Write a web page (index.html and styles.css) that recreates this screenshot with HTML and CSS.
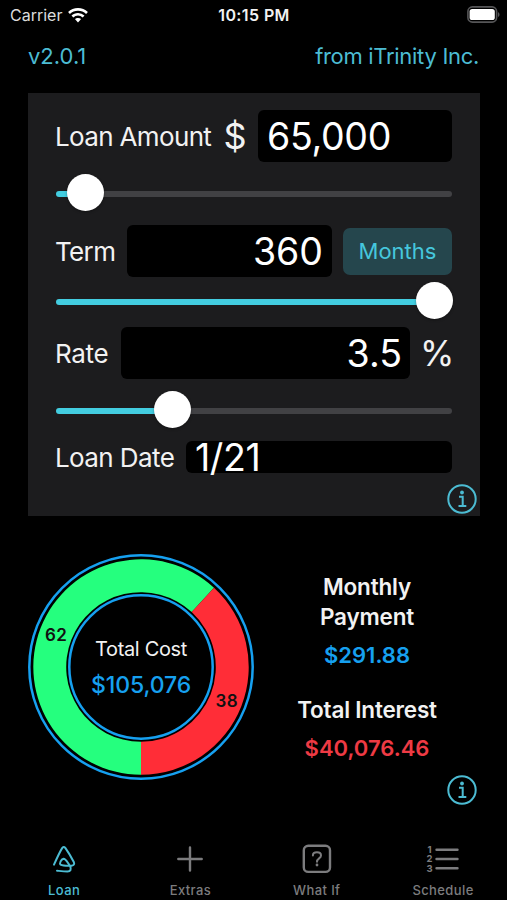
FILE: index.html
```html
<!DOCTYPE html>
<html lang="en">
<head>
<meta charset="utf-8">
<title>Loan</title>
<link rel="stylesheet" href="styles.css">
</head>
<body>
<div class="app">
  <header class="status">
    <div class="carrier"><span>Carrier</span>
      <svg width="20" height="15" viewBox="0 0 20 15" fill="#fff"><path d="M10 0C6.200 0 2.700 1.500.1 4L1.900 5.900A11.700 11.700 0 0 1 18.100 5.900L19.900 4A14.300 14.300 0 0 0 10 0Z"/><path d="M10 5C7.500 5 5.200 6 3.500 7.600L5.300 9.400A6.900 6.900 0 0 1 14.700 9.400L16.500 7.600A9.400 9.400 0 0 0 10 5Z"/><path d="M10 9.900C8.800 9.900 7.700 10.400 6.900 11.100L10 14.400 13.100 11.100A4.500 4.500 0 0 0 10 9.900Z"/></svg>
    </div>
    <div class="clock">10:15 PM</div>
    <svg class="battery" width="33" height="17" viewBox="0 0 33 17"><rect x=".9" y=".9" width="28.700" height="15.200" rx="4.500" fill="none" stroke="#555557" stroke-width="1.600"/><rect x="2.600" y="2.900" width="25.200" height="11.200" rx="2.600" fill="#fff"/><path d="M31 6.200c2 .7 2 4 0 4.700z" fill="#555557"/></svg>
  </header>

  <div class="topline"><span class="version">v2.0.1</span><span class="maker">from iTrinity Inc.</span></div>

  <main class="panel">
    <div class="row">
      <span class="label amount-label">Loan Amount</span><span class="dollar">$</span>
      <div class="field amount">65,000</div>
    </div>
    <div class="slider s1"><div class="fill"></div><div class="knob"></div><div class="rest"></div></div>
    <div class="row">
      <span class="label term-label">Term</span>
      <div class="field term">360</div>
      <button class="unit">Months</button>
    </div>
    <div class="slider s2"><div class="fill"></div><div class="knob"></div></div>
    <div class="row">
      <span class="label rate-label">Rate</span>
      <div class="field rate">3.5</div>
      <span class="percent">%</span>
    </div>
    <div class="slider s3"><div class="fill"></div><div class="knob"></div><div class="rest"></div></div>
    <div class="row date-row">
      <span class="label date-label">Loan Date</span>
      <div class="field date">1/21</div>
    </div>
    <svg class="info" width="30" height="30" viewBox="0 0 30 30"><circle cx="15" cy="15" r="13.700"/><path d="M12 12.800h3.700v9.100M11.500 22.100h7.800"/><circle class="dot" cx="15" cy="8.500" r="1.900"/></svg>
  </main>

  <section class="summary">
    <svg class="donut" width="228" height="228" viewBox="-114 -114 228 228">
      <path fill="#25ff7e" d="M0 107.700A107.700 107.700 0 1 1 73-79.200L50.700-55A74.800 74.800 0 1 0 0 74.800Z"/>
      <path fill="#ff2d37" d="M0 107.700A107.700 107.700 0 0 0 73-79.200L50.700-55A74.800 74.800 0 0 1 0 74.800Z"/>
      <circle r="111.700"/><circle r="71.700"/>
      <text class="share" x="-85" y="-26.400">62</text>
      <text class="share" x="85.700" y="40.300">38</text>
      <text class="cost-name" x="0" y="-11.200">Total Cost</text>
      <text class="cost" x="0" y="25.600">$105,076</text>
    </svg>
    <div class="totals">
      <div class="title monthly">Monthly<br>Payment</div>
      <div class="value blue">$291.88</div>
      <div class="title interest">Total Interest</div>
      <div class="value red">$40,076.46</div>
      <svg class="info" width="30" height="30" viewBox="0 0 30 30"><circle cx="15" cy="15" r="13.700"/><path d="M12 12.800h3.700v9.100M11.500 22.100h7.800"/><circle class="dot" cx="15" cy="8.500" r="1.900"/></svg>
    </div>
  </section>

  <nav class="tabs">
    <div class="tab active"><svg width="30" height="32" viewBox="0 0 30 32"><path d="M5 21.700C8 15 11 8.500 13.300 4.900Q14.800 3.200 16.300 4.900C19.500 9.500 22.500 14.500 24.800 19Q26.200 22.300 22.500 22.800C18 23 13.500 22.700 11.500 21.600C10.300 20.500 12 16.200 14.500 15.700C17 15.700 18.800 20 21 22.800C22.700 26.500 21.500 28.500 18.500 28.500C15 28.500 11 28 8 27.700"/></svg><span>Loan</span></div>
    <div class="tab extras"><svg width="30" height="32" viewBox="0 0 30 32"><path d="M15 4.400v23.200M3.300 16h23.400"/></svg><span>Extras</span></div>
    <div class="tab whatif"><svg width="30" height="32" viewBox="0 0 30 32"><rect x="1.800" y="2.700" width="26.200" height="26.200" rx="4.500"/><path class="thin" d="M10.900 12.500C10.900 8.300 19 8.300 19 12.500C19 15.500 15 15.300 15 18.800"/><circle class="dot" cx="15" cy="22" r="1.400"/></svg><span>What If</span></div>
    <div class="tab schedule"><svg width="34" height="32" viewBox="0 0 34 32"><path d="M10.500 6.800h21M10.500 16h21M10.500 25.200h21"/><g class="nums"><text x="3.700" y="10">1</text><text x="3.700" y="19.300">2</text><text x="3.700" y="28.500">3</text></g></svg><span>Schedule</span></div>
  </nav>
</div>
</body>
</html>
```
FILE: styles.css
```css
* { box-sizing: border-box; }
body { margin: 0; background: #000; color: #f2f2f2; font-family: Inter, "Liberation Sans", sans-serif; }
.app { width: 507px; height: 900px; overflow: hidden; display: flex; flex-direction: column; background: #000; }
svg { display: block; flex: none; }
span, .field, .unit, .clock, .title, .value { white-space: nowrap; }

.status { height: 30px; flex: none; display: grid; grid-template-columns: 1fr auto 1fr; align-items: center; padding: 0 7px 0 10px; }
.carrier { display: flex; align-items: center; gap: 6px; font-size: 16px; line-height: 20px; color: #dcdcdc; }
.clock { font-size: 16px; font-weight: 600; line-height: 20px; letter-spacing: .4px; margin-right: 2px; }
.battery { justify-self: end; margin-top: -2px; }

.topline { height: 63px; flex: none; display: flex; justify-content: space-between; padding: 12px 28px 0; font-size: 22px; line-height: 29px; color: #4cbcd3; }
.maker { letter-spacing: -.3px; }

.panel { margin: 0 27px 0 28px; height: 423px; flex: none; background: #1c1c1e; padding: 17px 28px 0 27px; display: flex; flex-direction: column; }
.row { display: flex; align-items: center; height: 52px; flex: none; }
.label { font-size: 26px; line-height: 53px; flex: none; letter-spacing: -.65px; }
.field { height: 52px; line-height: 53px; background: #000; border-radius: 6px; font-size: 37.500px; color: #fff; padding: 0 8px; flex: none; }
.dollar { width: 46px; text-align: center; font-size: 36px; line-height: 54px; }
.amount-label { width: 157px; }
.amount { width: 194px; padding-left: 9px; letter-spacing: -.3px; }
.term-label { width: 72px; }
.term { width: 205px; text-align: right; padding-right: 9px; }
.unit { margin: 0 0 0 11px; padding: 0; border: 0; width: 110px; height: 47px; border-radius: 7px; background: #25464d; color: #45c7dd; font: 22px/47px Inter, sans-serif; }
.rate-label { width: 66px; letter-spacing: -.3px; }
.rate { width: 289px; text-align: right; }
.percent { width: 31px; margin-left: 10px; font-size: 35px; line-height: 52px; letter-spacing: -2px; }
.date-row { height: 32px; }
.date-label { width: 131px; letter-spacing: -.6px; }
.date { width: 266px; height: 32px; line-height: 34px; letter-spacing: -.4px; padding-left: 9px; }

.slider { display: flex; align-items: center; height: 37px; width: 396px; margin-left: 1px; flex: none; }
.fill, .rest { height: 6px; margin-top: 3px; }
.fill { background: #43cde0; border-radius: 3px 0 0 3px; }
.rest { background: #414144; border-radius: 0 3px 3px 0; flex: 1; }
.knob { width: 37px; height: 37px; border-radius: 50%; background: #fff; flex: none; margin: 0 -1px; box-shadow: 0 1px 3px rgba(0,0,0,.35); z-index: 1; }
.slider.s1 { margin-top: 12px; margin-bottom: 14px; }
.s1 .fill { width: 12px; }
.slider.s2 { margin-top: 5px; margin-bottom: 8px; }
.s2 .fill { width: 361px; }
.slider.s3 { margin-top: 12px; margin-bottom: 13px; }
.s3 .fill { width: 99px; }

.info { fill: none; stroke: #4cbcd3; stroke-width: 2; }
.dot { stroke: none; fill: #4cbcd3; }
.panel .info { align-self: flex-end; margin: 11px -25px 0 0; }

.summary { display: flex; height: 310px; flex: none; padding: 37px 30px 0 27px; }
.donut circle { fill: none; stroke: #16a0f0; stroke-width: 2.500; }
.donut text { text-anchor: middle; }
.donut .share { font-size: 17px; font-weight: 600; letter-spacing: .3px; fill: #111; }
.donut .cost-name { font-size: 20px; letter-spacing: -.35px; fill: #f2f2f2; }
.donut .cost { font-size: 23px; font-weight: 500; letter-spacing: -.1px; fill: #16a0f0; }
.totals { flex: 1; display: flex; flex-direction: column; align-items: center; padding: 19px 0 0 2px; }
.title { font-size: 22.500px; font-weight: 600; line-height: 30px; text-align: center; letter-spacing: -.2px; }
.value { font-size: 22px; font-weight: 600; line-height: 30px; margin-top: 8px; }
.interest { margin-top: 25px; }
.blue { color: #16a0f0; }
.red { color: #ee3a44; }
.totals .info { align-self: flex-end; margin: 12px 0 0; }

.tabs { flex: 1; display: flex; padding: 17px 0 0 1px; }
.tab { width: 126.300px; flex: none; display: flex; flex-direction: column; align-items: center; gap: 6px; color: #7c7c7e; font-size: 13px; font-weight: 500; line-height: 18px; letter-spacing: .4px; }
.tab svg { fill: none; stroke: currentColor; stroke-width: 2.400; stroke-linecap: round; stroke-linejoin: round; }
.tab .dot { fill: currentColor; stroke: none; }
.tab .thin { stroke-width: 2; }
.tab .nums { fill: currentColor; stroke: none; font-size: 9.500px; font-weight: 700; text-anchor: middle; }
.tab.active { color: #4cbcd3; }
.tab.active svg { stroke-width: 2; }
```
